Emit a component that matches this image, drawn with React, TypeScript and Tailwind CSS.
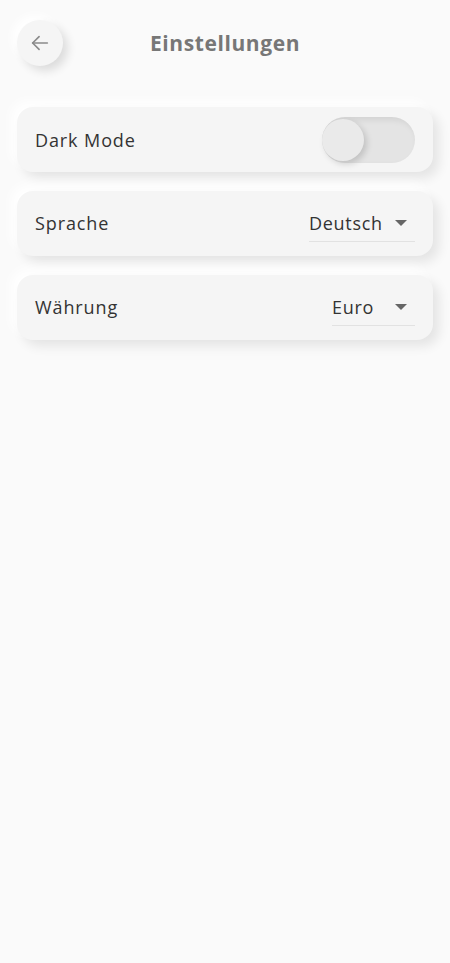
import React from "react";

function Dropdown({ value, width }: { value: string; width: string }) {
  return (
    <div className={`flex items-center justify-between border-b border-[#e2e2e2] ${width} h-[34px] pb-[2px] mt-[2px]`}>
      <span className="text-[18px] tracking-[0.7px] text-[#333]">{value}</span>
      <svg width="12" height="6" viewBox="0 0 12 6" className="mr-[8px]">
        <path d="M0 0 L12 0 L6 6 Z" fill="#666" />
      </svg>
    </div>
  );
}

function Card({ children }: { children: React.ReactNode }) {
  return (
    <div className="flex items-center justify-between h-[65px] rounded-[16px] bg-[#f5f5f5] pl-[18px] pr-[18px] shadow-[6px_6px_12px_rgba(0,0,0,0.09),-6px_-6px_12px_rgba(255,255,255,1)]">
      {children}
    </div>
  );
}

export default function App() {
  return (
    <div className="min-h-[963px] w-[450px] bg-[#fafafa]" style={{ fontFamily: "'Open Sans', sans-serif" }}>
      <div className="relative flex items-center h-[86px] px-[17px]">
        <button className="flex items-center justify-center w-[46px] h-[46px] rounded-full bg-[#f5f5f5] shadow-[5px_5px_10px_rgba(0,0,0,0.12),-5px_-5px_10px_rgba(255,255,255,1)]">
          <svg width="22" height="22" viewBox="0 0 24 24" fill="none" stroke="#8a8a8a" strokeWidth="1.8" strokeLinecap="round" strokeLinejoin="round">
            <path d="M20 12H4" />
            <path d="M11 5l-7 7 7 7" />
          </svg>
        </button>
        <div className="absolute left-0 right-0 top-[28px] text-center text-[21px] tracking-[0.6px] font-bold text-[#777] pointer-events-none leading-[30px]">
          Einstellungen
        </div>
      </div>
      <div className="flex flex-col gap-[19px] px-[17px] pt-[21px]">
        <Card>
          <span className="text-[18px] tracking-[0.9px] text-[#333] mt-[1px]">Dark Mode</span>
          <div className="relative w-[93px] h-[46px] rounded-full bg-[#e4e4e4] shadow-[inset_3px_3px_6px_rgba(0,0,0,0.08)]">
            <div className="absolute left-0 top-[2px] w-[42px] h-[42px] rounded-full bg-[#eaeaea] shadow-[3px_3px_6px_rgba(0,0,0,0.15)]" />
          </div>
        </Card>
        <Card>
          <span className="text-[18px] tracking-[0.9px] text-[#333]">Sprache</span>
          <Dropdown value="Deutsch" width="w-[106px]" />
        </Card>
        <Card>
          <span className="text-[18px] tracking-[0.9px] text-[#333]">Währung</span>
          <Dropdown value="Euro" width="w-[83px]" />
        </Card>
      </div>
    </div>
  );
}
